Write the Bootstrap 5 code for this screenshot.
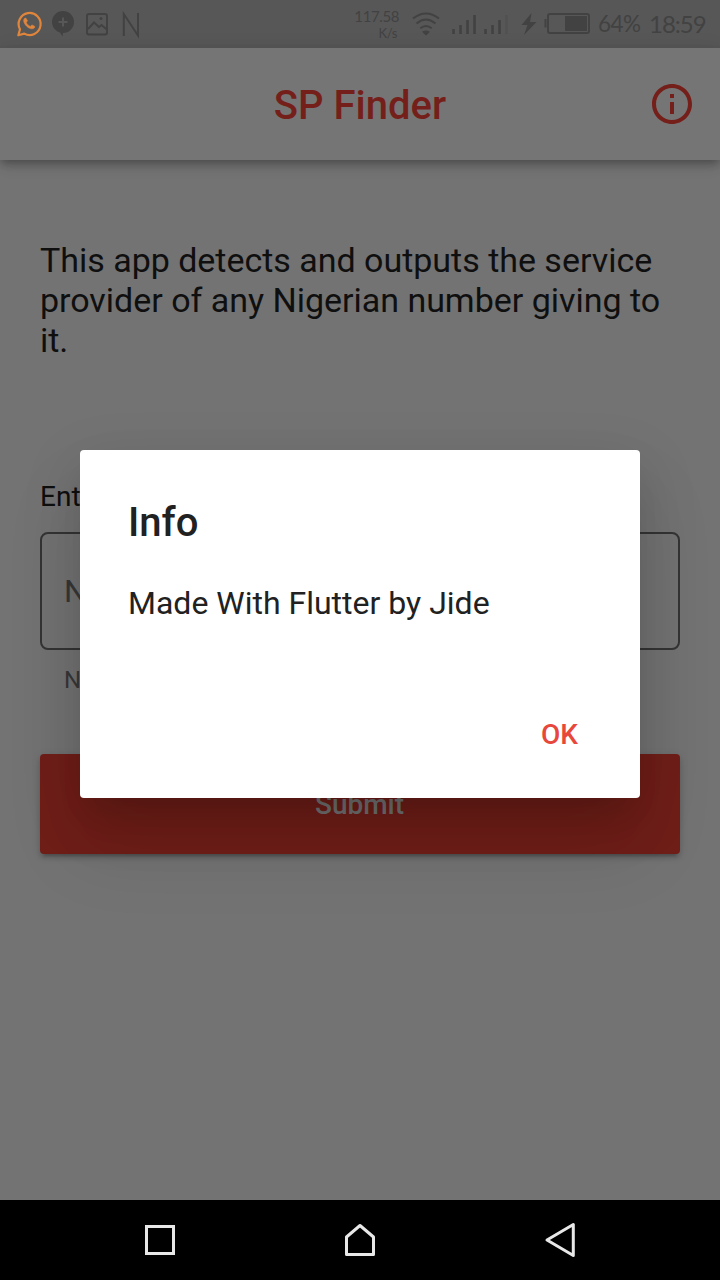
<!DOCTYPE html>
<html lang="en">
<head>
<meta charset="utf-8">
<meta name="viewport" content="width=device-width, initial-scale=1">
<title>SP Finder</title>
<link rel="stylesheet" href="https://cdn.jsdelivr.net/npm/bootstrap@5.3.0/dist/css/bootstrap.min.css">
<style>
  body { font-family: Roboto, sans-serif; background: #737373; color: #0f0f0f; }
  .phone { width: 720px; height: 1280px; }
  .status-bar { height: 48px; background: #575757; color: #424242; padding: 0 16px; font-family: Lato, sans-serif; }
  .status-bar svg { display: block; flex: none; }
  .speed { width: 50px; font-size: 15px; line-height: 16px; margin-right: 13px; padding-top: 1px; letter-spacing: -.4px; }
  .speed .unit { font-size: 13px; padding-right: 2px; }
  .status-num { line-height: 48px; white-space: nowrap; }
  .battery-text { width: 44px; margin-left: 6px; font-size: 22.5px; letter-spacing: -.6px; }
  .clock-text { width: 55px; margin-left: 7px; font-size: 24px; letter-spacing: -1px; }
  .app-bar { height: 112px; background: #757575; box-shadow: 0 4px 8px -2px rgba(0,0,0,.24), 0 6px 10px rgba(0,0,0,.12), 0 2px 20px rgba(0,0,0,.08); padding: 0 28px; }
  .title-spacer { width: 40px; }
  .app-title { font-size: 40px; line-height: 48px; font-weight: 500; color: #751f1a; padding-top: 3px; }
  .intro { font-size: 34px; line-height: 40px; letter-spacing: -.02px; margin: 80px 0 0; }
  .field-label { font-size: 28px; line-height: 32px; margin-top: 121px; }
  .number-box { height: 118px; margin-top: 19px; border: 2px solid #343434; border-radius: 8px; color: #383838; font-size: 32px; padding: 0 22px; }
  .hint { font-size: 24px; line-height: 28px; margin: 16px 24px 0; color: #383838; }
  .submit-btn, .submit-btn:hover { height: 100px; margin-top: 60px; background: #701e18; color: #737373; border: 0; border-radius: 4px; font-size: 28px; font-weight: 500; line-height: 32px; padding: 8px 1px 6px 0; box-shadow: 0 6px 2px -4px rgba(0,0,0,.15), 0 4px 4px rgba(0,0,0,.13), 0 2px 10px rgba(0,0,0,.12); }
  .info-dialog { left: 80px; top: 450px; width: 560px; height: 348px; background: #fff; color: #212121; border-radius: 4px; padding: 49px 48px 48px; box-shadow: 0 22px 30px -14px rgba(0,0,0,.13), 0 48px 76px 6px rgba(0,0,0,.09), 0 18px 60px 4px rgba(0,0,0,.1); }
  .info-dialog h2 { font-size: 40px; line-height: 48px; font-weight: 500; margin: 0; }
  .info-dialog p { font-size: 32px; line-height: 38px; margin: 37px 0 0; }
  .ok-btn { font-size: 28px; line-height: 32px; font-weight: 500; color: #e8473c; border: 0; padding: 0; margin: 97px 14px 0 0; }
  .nav-keys { height: 80px; background: #000; padding: 0 140px; }
</style>
</head>
<body>
<div class="phone d-flex flex-column position-relative overflow-hidden">
  <header class="status-bar d-flex align-items-center">
    <svg width="130" height="48" viewBox="16 0 130 48" fill="none" stroke="#424242" stroke-width="2">
      <g stroke="#e0853c">
        <path d="M18.300 35.200 20 29.300A11 11 0 1 1 24.300 33.600Z" stroke-linejoin="round" stroke-width="2.200"/>
        <path d="M26 18.300c-1-.7-2.300.4-2.300 2.200 0 3.700 4.500 8.300 8.400 8.300 1.800 0 3-1.300 2.500-2.500l-2.700-1.400-1.500 1.500c-2-.7-3.400-2.200-4.100-4l1.200-1.600Z" fill="#e0853c" stroke-width=".6"/>
      </g>
      <path d="M63 11a11 11 0 0 0-11 11c0 5.500 4 9.300 8 10.500l2.500 4L63 33a11 11 0 0 0 0-22Z" fill="#424242" stroke="none"/>
      <path d="M63 17.500v9M58.500 22h9" stroke="#575757"/>
      <rect x="87" y="14" width="20" height="20.500" rx="2"/>
      <path d="m88 29 6-6.500 5 4.500 2.500-2 6 5"/>
      <circle cx="101" cy="18.500" r="1.500" fill="#424242" stroke="none"/>
      <path d="M123.800 36V14L138 35.500V13"/>
    </svg>
    <div class="speed ms-auto text-end">117.58<br><span class="unit">K/s</span></div>
    <svg width="180" height="48" viewBox="412 0 180 48" fill="none" stroke="#424242" stroke-width="2">
      <path d="M413 18.500Q426 8.500 439 18.500M416.500 23.500Q426 15.500 435.500 23.500M420.300 28.300Q426 23.700 431.700 28.300"/>
      <path d="M422 31.800q4-2.500 8 0l-4 3.700Z" fill="#424242" stroke="none"/>
      <path d="M453.500 34v-5M460.500 34v-9M467.500 34V20M474.500 34V15M485.500 34v-5M492.500 34v-9M499.500 34V20" stroke-width="2.600"/>
      <path d="M506.500 34V15" stroke="#515151" stroke-width="2.600"/>
      <path d="m531.500 13-10 12h6l-3.500 10 12.500-13h-6.500Z" fill="#424242" stroke="none"/>
      <rect x="548" y="14" width="41" height="19" rx="2"/>
      <path d="M565 16h22v15h-22Z" fill="#424242" stroke="none"/>
      <path d="M545.500 19v8.500"/>
    </svg>
    <div class="status-num battery-text">64%</div>
    <div class="status-num clock-text">18:59</div>
  </header>
  <div class="app-bar d-flex align-items-center position-relative">
    <span class="title-spacer"></span>
    <div class="app-title flex-grow-1 text-center">SP Finder</div>
    <svg width="40" height="40" viewBox="2 2 20 20" fill="#751f1a"><path d="M11 7h2v2h-2zm0 4h2v6h-2zm1-9C6.480 2 2 6.480 2 12s4.480 10 10 10 10-4.480 10-10S17.520 2 12 2zm0 18c-4.410 0-8-3.590-8-8s3.590-8 8-8 8 3.590 8 8-3.590 8-8 8z"/></svg>
  </div>
  <main class="flex-grow-1 px-4 mx-3 d-flex flex-column">
    <p class="intro">This app detects and outputs the service provider of any Nigerian number giving to it.</p>
    <div class="field-label">Ent</div>
    <div class="number-box d-flex align-items-center">N</div>
    <div class="hint">N</div>
    <button class="submit-btn btn w-100" type="button">Submit</button>
  </main>
  <section class="info-dialog position-absolute d-flex flex-column" role="dialog">
    <h2>Info</h2>
    <p>Made With Flutter by Jide</p>
    <button class="ok-btn btn align-self-end" type="button">OK</button>
  </section>
  <nav class="nav-keys d-flex justify-content-between align-items-center position-relative">
    <svg width="40" height="40" viewBox="0 0 40 40" fill="none" stroke="#e8e8e8" stroke-width="3"><path d="M6.500 6.500h27v27h-27Z"/></svg>
    <svg width="40" height="40" viewBox="0 0 40 40" fill="none" stroke="#e8e8e8" stroke-width="3" stroke-linejoin="round"><path d="M6.500 34.500V17L20 5.500 33.500 17v17.500Z"/></svg>
    <svg width="40" height="40" viewBox="0 0 40 40" fill="none" stroke="#e8e8e8" stroke-width="3" stroke-linejoin="round"><path d="M33.300 4.500v31L7 20Z"/></svg>
  </nav>
</div>
<script src="https://cdn.jsdelivr.net/npm/bootstrap@5.3.0/dist/js/bootstrap.bundle.min.js"></script>
</body>
</html>
